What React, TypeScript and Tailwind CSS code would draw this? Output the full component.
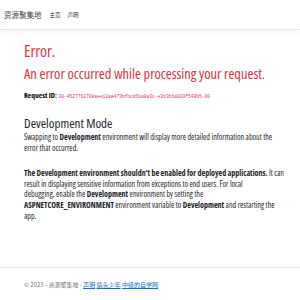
export default function App() {
  return (
    <div className="flex h-[300px] w-[300px] flex-col bg-white font-['Open_Sans','Noto_Sans_CJK_SC',sans-serif] text-[#212529] font-stretch-condensed">
      <header className="flex h-[30px] shrink-0 items-center border-b border-[#e5e5e5] px-[4px] shadow-[0_2px_6px_rgba(0,0,0,0.05)]">
        <span className="mr-[8px] font-['Noto_Sans_CJK_SC',sans-serif] text-[7.5px] leading-[10px] text-[#444]">资源聚集地</span>
        <nav className="flex items-center gap-[7px] font-['Noto_Sans_CJK_SC',sans-serif] text-[5.5px] leading-[8px] text-[#333]">
          <span>主页</span>
          <span>声明</span>
        </nav>
      </header>

      <main className="flex flex-col px-[24px]">
        <h1 className="mt-[11px] text-[16px] leading-[20px] text-[#dc3545]">Error.</h1>
        <h2 className="mt-[4px] whitespace-nowrap text-[14.4px] leading-[18px] text-[#dc3545]">
          An error occurred while processing your request.
        </h2>
        <div className="mt-[7px] flex items-baseline gap-[1.5px] whitespace-nowrap leading-[10px]">
          <span className="text-[7.5px] font-bold text-black">Request ID:</span>
          <code className="font-['Liberation_Mono',monospace] text-[4.6px] text-[#d63384]">
            00-4527762708aee12aa473bfbcd61a8a3c-e9b3b6a020f549b5-00
          </code>
        </div>
        <h3 className="mt-[13px] text-[13px] leading-[16px]">Development Mode</h3>
        <p className="mt-[1px] whitespace-nowrap text-[8px] leading-[10.6px]">
          Swapping to <strong className="font-bold">Development</strong> environment will display more detailed information about the
          <br />
          error that occurred.
        </p>
        <p className="mt-[15px] whitespace-nowrap text-[8px] leading-[10.6px]">
          <strong className="font-bold">The Development environment shouldn't be enabled for deployed applications.</strong> It can
          <br />
          result in displaying sensitive information from exceptions to end users. For local
          <br />
          debugging, enable the <strong className="font-bold">Development</strong> environment by setting the
          <br />
          <strong className="font-bold">ASPNETCORE_ENVIRONMENT</strong> environment variable to{" "}
          <strong className="font-bold">Development</strong> and restarting the
          <br />
          app.
        </p>
      </main>

      <footer className="mt-auto flex h-[33px] shrink-0 items-center border-t border-[#e5e5e5] px-[24px] pt-[1px]">
        <span className="whitespace-nowrap font-['Noto_Sans_CJK_SC',sans-serif] text-[6px] leading-[8px] text-[#6c757d]">
          © 2023 - 资源聚集地 -{" "}
          <a className="text-[#1b6ec2] underline">声明</a>{" "}
          <a className="text-[#1b6ec2] underline">猿头少年</a>{" "}
          <a className="text-[#1b6ec2] underline">中级的自学网</a>
        </span>
      </footer>
    </div>
  );
}
